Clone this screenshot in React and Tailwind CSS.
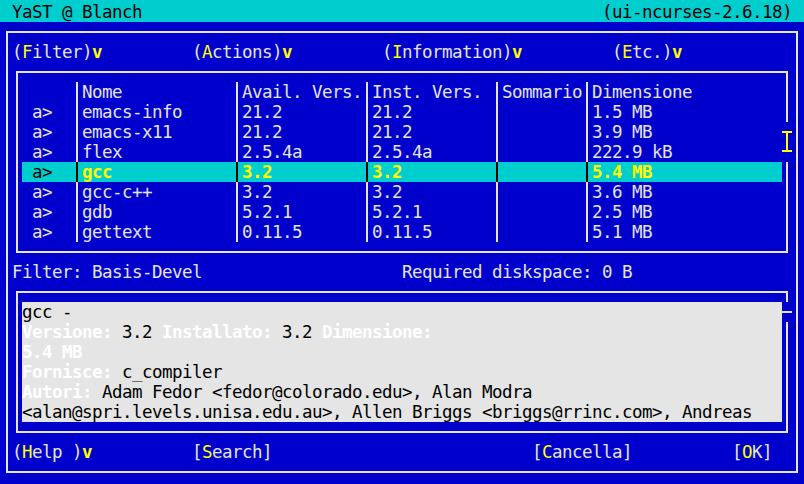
import React from "react";

const rows = [
  { name: "emacs-info", avail: "21.2", inst: "21.2", size: "1.5 MB" },
  { name: "emacs-x11", avail: "21.2", inst: "21.2", size: "3.9 MB" },
  { name: "flex", avail: "2.5.4a", inst: "2.5.4a", size: "222.9 kB" },
  { name: "gcc", avail: "3.2", inst: "3.2", size: "5.4 MB", selected: true },
  { name: "gcc-c++", avail: "3.2", inst: "3.2", size: "3.6 MB" },
  { name: "gdb", avail: "5.2.1", inst: "5.2.1", size: "2.5 MB" },
  { name: "gettext", avail: "0.11.5", inst: "0.11.5", size: "5.1 MB" },
];

const Sep = ({ dark }) => (
  <div className="w-[10px] flex justify-center">
    <div className={dark ? "w-[2px] h-full bg-black" : "w-[2px] h-full bg-[#e5e5e5]"} />
  </div>
);

const Hot = ({ children }) => <span className="text-[#ffff00]">{children}</span>;
const Arrow = () => <span className="text-[#ffff00] font-bold">v</span>;

const TableRow = ({ a, name, avail, inst, somm, size, selected }) => {
  const txt = selected ? "text-[#ffff00] font-bold" : "";
  return (
    <div className={selected ? "flex h-[20px] w-[760px] bg-[#00cdcd]" : "flex h-[20px] w-[760px]"}>
      <div className={selected ? "w-[50px] pl-[10px] text-black" : "w-[50px] pl-[10px]"}>{a}</div>
      <Sep dark={selected} />
      <div className={`w-[150px] ${txt}`}>{name}</div>
      <Sep dark={selected} />
      <div className={`w-[120px] ${txt}`}>{avail}</div>
      <Sep dark={selected} />
      <div className={`w-[120px] ${txt}`}>{inst}</div>
      <Sep dark={selected} />
      <div className={`w-[80px] ${txt}`}>{somm}</div>
      <Sep dark={selected} />
      <div className={`w-[190px] ${txt}`}>{size}</div>
    </div>
  );
};

const B = ({ children }) => <span className="text-white font-bold">{children}</span>;

export default function App() {
  return (
    <div className="w-[804px] h-[484px] overflow-hidden bg-[#0000cd] text-[#e5e5e5] font-['DejaVu_Sans_Mono',monospace] text-[17.5px] tracking-[-0.535px] leading-[20px] whitespace-pre">
      {/* title bar */}
      <div className="h-[22px] bg-[#00cdcd] text-black pt-[2px] px-[12px] flex justify-between">
        <span>YaST @ Blanch</span>
        <span>(ui-ncurses-2.6.18)</span>
      </div>

      {/* outer frame */}
      <div className="ml-[6px] mt-[9px] w-[792px] h-[442px] border-2 border-[#e5e5e5] pt-[9px]">
        {/* menu */}
        <div className="flex h-[20px] pl-[4px]">
          <div className="w-[180px]">(<Hot>F</Hot>ilter)<Arrow /></div>
          <div className="w-[190px]">(<Hot>A</Hot>ctions)<Arrow /></div>
          <div className="w-[230px]">(<Hot>I</Hot>nformation)<Arrow /></div>
          <div>(<Hot>E</Hot>tc.)<Arrow /></div>
        </div>

        {/* package table */}
        <div className="ml-[8px] mt-[9px] w-[772px] h-[182px] border-t-2 border-b-2 border-l-2 border-[#e5e5e5] flex relative">
          <div className="flex-1 pt-[9px] pl-[4px]">
            <TableRow a="" name="Nome" avail="Avail. Vers." inst="Inst. Vers." somm="Sommario" size="Dimensione" />
            {rows.map((r) => (
              <TableRow key={r.name} a="a>" somm="" {...r} />
            ))}
          </div>
          <div className="w-[2px] flex flex-col">
            <div className="h-[49px] bg-[#e5e5e5]" />
            <div className="h-[40px]" />
            <div className="flex-1 bg-[#e5e5e5]" />
          </div>
          {/* mouse pointer */}
          <svg className="absolute left-[764px] top-[58px]" width="10" height="21" viewBox="0 0 10 21">
            <rect x="0" y="0" width="10" height="2" fill="#ffff00" />
            <rect x="4" y="0" width="2" height="21" fill="#ffff00" />
            <rect x="0" y="19" width="10" height="2" fill="#ffff00" />
          </svg>
        </div>

        {/* filter line */}
        <div className="flex h-[20px] mt-[9px] pl-[4px]">
          <div className="w-[390px]">Filter: Basis-Devel</div>
          <div>Required diskspace: 0 B</div>
        </div>

        {/* description */}
        <div className="ml-[8px] mt-[9px] w-[772px] h-[142px] border-t-2 border-b-2 border-l-2 border-[#e5e5e5] flex">
          <div className="flex-1 pt-[9px] pl-[4px]">
            <div className="w-[760px] h-[120px] bg-[#e5e5e5] text-black">
              <div className="h-[20px]">gcc -</div>
              <div className="h-[20px]">
                <B>Versione:</B> 3.2 <B>Installato:</B> 3.2 <B>Dimensione:</B>
              </div>
              <div className="h-[20px]"><B>5.4 MB</B></div>
              <div className="h-[20px]"><B>Fornisce:</B> c_compiler</div>
              <div className="h-[20px]"><B>Autori:</B> Adam Fedor &lt;fedor@colorado.edu&gt;, Alan Modra</div>
              <div className="h-[20px]">&lt;alan@spri.levels.unisa.edu.au&gt;, Allen Briggs &lt;briggs@rrinc.com&gt;, Andreas</div>
            </div>
          </div>
          <div className="w-[2px] flex flex-col">
            <div className="h-[9px] bg-[#e5e5e5]" />
            <div className="h-[20px] pt-[9px]">
              <div className="h-[2px] w-[10px] -ml-[4px] bg-[#e5e5e5]" />
            </div>
            <div className="flex-1 bg-[#e5e5e5]" />
          </div>
        </div>

        {/* buttons */}
        <div className="flex h-[20px] mt-[9px] pl-[4px]">
          <div className="w-[180px]">(<Hot>H</Hot>elp )<Arrow /></div>
          <div className="w-[340px]">[<Hot>S</Hot>earch]</div>
          <div className="w-[200px]">[<Hot>C</Hot>ancella]</div>
          <div>[<Hot>O</Hot>K]</div>
        </div>
      </div>
    </div>
  );
}
